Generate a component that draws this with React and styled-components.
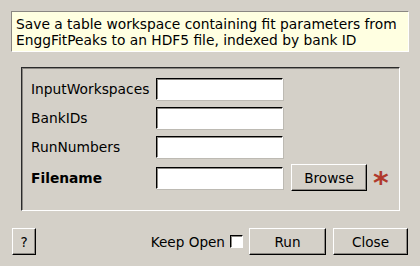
import React from 'react'
import styled, { createGlobalStyle } from 'styled-components'

const Global = createGlobalStyle`
  html, body {
    margin: 0;
    padding: 0;
    background: #d4d0c8;
  }
  body {
    font-family: 'DejaVu Sans', 'Liberation Sans', sans-serif;
    font-size: 13.6px;
    color: #000;
  }
`

const Dialog = styled.div`
  width: 420px;
  height: 266px;
  box-sizing: border-box;
  padding: 11px 11px 0 11px;
  display: flex;
  flex-direction: column;
`

const Description = styled.div`
  height: 41px;
  box-sizing: border-box;
  width: 398px;
  background: #ffffe1;
  border-style: solid;
  border-width: 1px;
  border-color: #8a8782 #ffffff #ffffff #8a8782;
  padding: 4px 0 0 4px;
  font-size: 13.8px;
  line-height: 16px;
  white-space: nowrap;
`

const Group = styled.div`
  margin: 15px 0 0 10px;
  width: 379px;
  height: 144px;
  box-sizing: border-box;
  border-style: solid;
  border-width: 1px;
  border-color: #2a2a2a #ffffff #ffffff #2a2a2a;
  box-shadow: inset 1px 1px 0 #8a8782;
  padding: 10px 0 0 9px;
  display: grid;
  grid-template-columns: 125px auto;
  grid-auto-rows: 22px;
  row-gap: 7px;
  align-items: center;
`

const Label = styled.div`
  font-size: 13.8px;
  white-space: nowrap;
  font-weight: ${p => (p.bold ? 'bold' : 'normal')};
  margin-top: ${p => (p.shift ? '3px' : '0')};
`

const Field = styled.div`
  display: flex;
  align-items: center;
  margin-top: ${p => (p.shift ? '3px' : '0')};
`

const Input = styled.div`
  width: 127px;
  height: 22px;
  box-sizing: border-box;
  background: #fff;
  border-style: solid;
  border-width: 1px;
  border-color: #000 #ffffff #ffffff #000;
  box-shadow: inset 1px 1px 0 #8a8782, 1px 1px 0 #bdbab3;
`

const Button = styled.div`
  box-sizing: border-box;
  width: ${p => p.w}px;
  height: 27px;
  margin-left: ${p => p.ml || 0}px;
  display: flex;
  align-items: center;
  justify-content: center;
  background: #d4d0c8;
  border-style: solid;
  border-width: 1px;
  border-color: #ffffff #000 #000 #ffffff;
  box-shadow: inset -1px -1px 0 #8a8782;
`

const Star = styled.span`
  color: #b0392c;
  font-size: 30px;
  font-weight: bold;
  line-height: 1;
  margin: 10px 0 0 6px;
`

const Footer = styled.div`
  display: flex;
  align-items: center;
  margin: 17px 0 0 1px;
  width: 396px;
`

const Spacer = styled.div`
  flex: 1;
`

const Check = styled.div`
  width: 13px;
  height: 13px;
  box-sizing: border-box;
  margin: 0 6px 0 5px;
  background: #fff;
  border-style: solid;
  border-width: 1px;
  border-color: #000 #ffffff #ffffff #000;
  box-shadow: inset 1px 1px 0 #8a8782;
`

export default function App() {
  return (
    <Dialog>
      <Global />
      <Description>
        Save a table workspace containing fit parameters from
        <br />
        EnggFitPeaks to an HDF5 file, indexed by bank ID
      </Description>
      <Group>
        <Label>InputWorkspaces</Label>
        <Field>
          <Input />
        </Field>
        <Label>BankIDs</Label>
        <Field>
          <Input />
        </Field>
        <Label>RunNumbers</Label>
        <Field>
          <Input />
        </Field>
        <Label bold shift>
          Filename
        </Label>
        <Field shift>
          <Input />
          <Button w={76} ml={8}>
            Browse
          </Button>
          <Star>*</Star>
        </Field>
      </Group>
      <Footer>
        <Button w={24}>?</Button>
        <Spacer />
        <span>Keep Open</span>
        <Check />
        <Button w={77}>Run</Button>
        <Button w={75} ml={7}>
          Close
        </Button>
      </Footer>
    </Dialog>
  )
}
